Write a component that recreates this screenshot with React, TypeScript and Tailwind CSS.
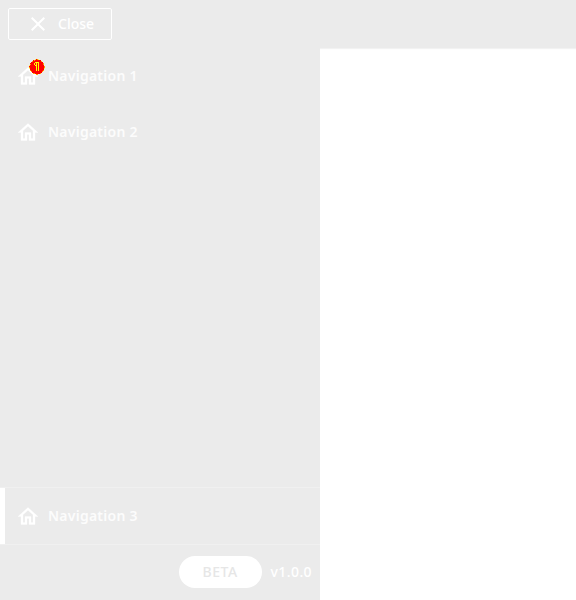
const HomeIcon = () => (
  <svg viewBox="0 0 24 24" className="size-6 shrink-0" fill="currentColor" stroke="currentColor" strokeWidth="0.3">
    <path transform="translate(0 0.5)" d="M12 5.69l5 4.5V18h-2v-6H9v6H7v-7.81l5-4.5M12 3L2 12h3v8h6v-6h2v6h6v-8h3L12 3z" />
  </svg>
);

// Small pixel-style marker pinned to the corner of a navigation icon.
const MarkerBadge = () => (
  <svg viewBox="0 0 16 16" className="absolute -top-[5px] left-[13px] size-4" shapeRendering="crispEdges" fill="none">
    <circle cx="8" cy="8" r="7.7" fill="#ff0000" />
    <circle cx="8" cy="8" r="7.4" stroke="#ffff00" strokeWidth="0.6" strokeDasharray="2 1.5" />
    <path stroke="#ffff00" d="M6 3.5h4M5 4.5h1M5 5.5h1M6 6.5h1M7.5 4v8M9.5 4v8" />
  </svg>
);

function NavItem({ label, active = false, marked = false }: { label: string; active?: boolean; marked?: boolean }) {
  return (
    <a className={`flex h-14 items-center gap-2 pr-4 text-sm font-semibold tracking-[0.25px] ${active ? "border-l-[5px] border-white pl-[11px]" : "pl-4"}`}>
      <span className="relative flex">
        <HomeIcon />
        {marked && <MarkerBadge />}
      </span>
      <span className="text-[#fcfcfc]">{label}</span>
    </a>
  );
}

export default function App() {
  return (
    <div className="flex h-[600px] w-[576px] flex-col bg-white font-['Noto_Sans',sans-serif] text-white">
      <header className="flex h-12 shrink-0 items-center bg-[#ebebeb] px-2 shadow-[0_1px_1px_rgba(0,0,0,0.05)]">
        <button className="flex h-8 w-[104px] items-center gap-2 rounded-[2px] border border-white pl-[17px] text-sm font-medium">
          <svg viewBox="0 0 24 24" className="size-6" fill="currentColor">
            <path d="M19 6.41L17.59 5 12 10.59 6.41 5 5 6.41 10.59 12 5 17.59 6.41 19 12 13.41 17.59 19 19 17.59 13.41 12z" />
          </svg>
          Close
        </button>
      </header>
      <aside className="relative flex w-80 flex-1 flex-col bg-[#ebebeb]">
        <nav className="flex-1">
          <NavItem label="Navigation 1" marked />
          <NavItem label="Navigation 2" />
        </nav>
        <div className="border-y border-[#f0f0f0]">
          <NavItem label="Navigation 3" active />
        </div>
        <footer className="flex h-[55px] items-center justify-end gap-[9px] pr-2 pb-[2px] text-sm font-medium">
          <span className="flex h-8 w-[83px] items-center justify-center rounded-full bg-white tracking-[0.5px] text-[#e6e6e6]">BETA</span>
          <span className="tracking-[0.4px]">v1.0.0</span>
        </footer>
      </aside>
    </div>
  );
}
